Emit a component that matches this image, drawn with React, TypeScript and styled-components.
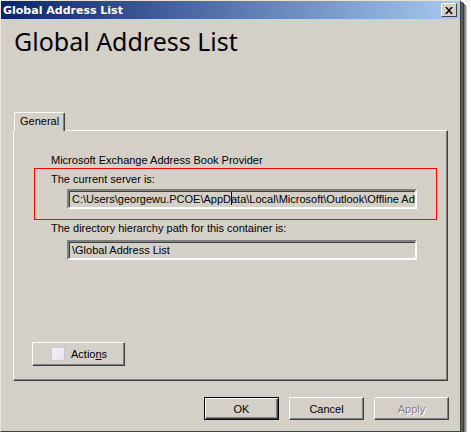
import React from "react";
import styled, { createGlobalStyle } from "styled-components";

const GlobalStyle = createGlobalStyle`
  html, body {
    margin: 0;
    padding: 0;
    background: #ffffff;
  }
  body {
    font-family: Tahoma, "Liberation Sans", sans-serif;
  }
`;

export default function App() {
  return (
    <>
      <GlobalStyle />
      <Window>
        <TitleBar>
          <TitleText>Global Address List</TitleText>
          <CloseButton>
            <svg width="8" height="7" viewBox="0 0 8 7">
              <path d="M0 0h2l2 2.5L6 0h2L5 3.5 8 7H6L4 4.5 2 7H0l3-3.5z" fill="#000" />
            </svg>
          </CloseButton>
        </TitleBar>
        <Body>
          <Heading>Global Address List</Heading>
          <TabStrip>
            <Tab>General</Tab>
          </TabStrip>
          <Panel>
            <Label $indent={17}>Microsoft Exchange Address Book Provider</Label>
            <Highlight>
              <Label>The current server is:</Label>
              <Field>
                C:\Users\georgewu.PCOE\AppD<Caret />ata\Local\Microsoft\Outlook\Offline Address Books
              </Field>
            </Highlight>
            <Label $indent={17} $top={2}>
              The directory hierarchy path for this container is:
            </Label>
            <Field $indent={33}>\Global Address List</Field>
            <ActionsButton>
              <CheckBox />
              <span>
                Actio<u>n</u>s
              </span>
            </ActionsButton>
          </Panel>
          <ButtonRow>
            <DialogButton $default>OK</DialogButton>
            <DialogButton>Cancel</DialogButton>
            <DialogButton $disabled>Apply</DialogButton>
          </ButtonRow>
        </Body>
      </Window>
    </>
  );
}

const Window = styled.div`
  width: 461px;
  height: 432px;
  box-sizing: border-box;
  background: #d4d0c8;
  border: 1px solid;
  border-color: #e6e3dc #404040 #404040 #e6e3dc;
  display: flex;
  flex-direction: column;
  box-shadow: 2px 2px 0 #5a5a5a, 3px 3px 0 #3a3a3a, 4px 4px 0 #777, 5px 5px 0 #9a9a9a,
    6px 6px 0 #c4c4c4;
`;

const TitleBar = styled.div`
  height: 18px;
  display: flex;
  align-items: center;
  justify-content: space-between;
  padding: 0 3px 0 2px;
  background: linear-gradient(to right, #0a246a, #a6caf0);
`;

const TitleText = styled.span`
  color: #fff;
  font-family: Tahoma, "DejaVu Sans", sans-serif;
  font-weight: bold;
  font-size: 11px;
`;

const CloseButton = styled.div`
  width: 16px;
  height: 14px;
  box-sizing: border-box;
  background: #d4d0c8;
  border: 1px solid;
  border-color: #fff #404040 #404040 #fff;
  display: flex;
  align-items: center;
  justify-content: center;
`;

const Body = styled.div`
  flex: 1;
  display: flex;
  flex-direction: column;
  padding: 0 11px 0 12px;
`;

const Heading = styled.div`
  font-family: "Noto Sans", "Open Sans", sans-serif;
  font-size: 25px;
  color: #000;
  margin: 6px 0 0 1px;
  height: 33px;
  line-height: 33px;
`;

const TabStrip = styled.div`
  margin-top: 54px;
  display: flex;
  padding-left: 1px;
`;

const Tab = styled.div`
  height: 19px;
  width: 51px;
  box-sizing: border-box;
  border: 1px solid;
  border-bottom: none;
  border-color: #fff #404040 transparent #fff;
  border-radius: 2px 2px 0 0;
  box-shadow: inset -1px 0 0 #808080;
  font-size: 11px;
  line-height: 17px;
  padding-left: 5px;
  color: #000;
  position: relative;
  z-index: 1;
  margin-bottom: -1px;
  background: #d4d0c8;
`;

const Panel = styled.div`
  width: 435px;
  height: 251px;
  box-sizing: border-box;
  border: 1px solid;
  border-color: #fff #404040 #404040 #fff;
  box-shadow: inset -1px -1px 0 #808080;
  padding: 23px 0 14px 20px;
  display: flex;
  flex-direction: column;
  align-items: flex-start;
`;

const Label = styled.div<{ $indent?: number; $top?: number }>`
  font-size: 11px;
  line-height: 13px;
  color: #000;
  margin-left: ${(p) => p.$indent ?? 0}px;
  margin-top: ${(p) => p.$top ?? 0}px;
  white-space: nowrap;
`;

const Highlight = styled.div`
  width: 403px;
  height: 52px;
  box-sizing: border-box;
  border: 1px solid #ff0000;
  margin-top: 1px;
  padding: 4px 0 0 16px;
  display: flex;
  flex-direction: column;
  gap: 3px;
`;

const Field = styled.div<{ $indent?: number }>`
  width: 350px;
  height: 20px;
  box-sizing: border-box;
  margin-left: ${(p) => p.$indent ?? 16}px;
  border: 2px solid;
  border-color: #808080 #fff #fff #808080;
  box-shadow: inset 1px 1px 0 #404040;
  padding: 0 0 0 3px;
  font-size: 11px;
  line-height: 17px;
  color: #000;
  white-space: nowrap;
  overflow: hidden;
  ${(p) => (p.$indent ? "margin-top: 5px;" : "")}
`;

const Caret = styled.span`
  display: inline-block;
  width: 1px;
  height: 13px;
  background: #000;
  vertical-align: -2px;
  margin: 0 -1px 0 0;
`;

const ActionsButton = styled.div`
  margin-top: auto;
  margin-left: -2px;
  width: 93px;
  height: 24px;
  box-sizing: border-box;
  border: 1px solid;
  border-color: #fff #404040 #404040 #fff;
  box-shadow: inset -1px -1px 0 #808080;
  display: flex;
  align-items: center;
  gap: 6px;
  padding-left: 18px;
  font-size: 11px;
  color: #000;
`;

const CheckBox = styled.div`
  width: 12px;
  height: 12px;
  border: 1px solid #c8c4d8;
  background: linear-gradient(135deg, #f4f0fa, #e8e2f0);
`;

const ButtonRow = styled.div`
  display: flex;
  justify-content: flex-end;
  gap: 10px;
  margin-top: 16px;
`;

const DialogButton = styled.div<{ $default?: boolean; $disabled?: boolean }>`
  width: 75px;
  height: 23px;
  box-sizing: border-box;
  display: flex;
  align-items: center;
  justify-content: center;
  font-size: 11px;
  color: ${(p) => (p.$disabled ? "#808080" : "#000")};
  text-shadow: ${(p) => (p.$disabled ? "1px 1px 0 #fff" : "none")};
  border: 1px solid;
  border-color: ${(p) => (p.$default ? "#000" : "#fff #404040 #404040 #fff")};
  box-shadow: ${(p) =>
    p.$default
      ? "inset 1px 1px 0 #fff, inset -1px -1px 0 #404040, inset -2px -2px 0 #808080"
      : "inset -1px -1px 0 #808080"};
`;
